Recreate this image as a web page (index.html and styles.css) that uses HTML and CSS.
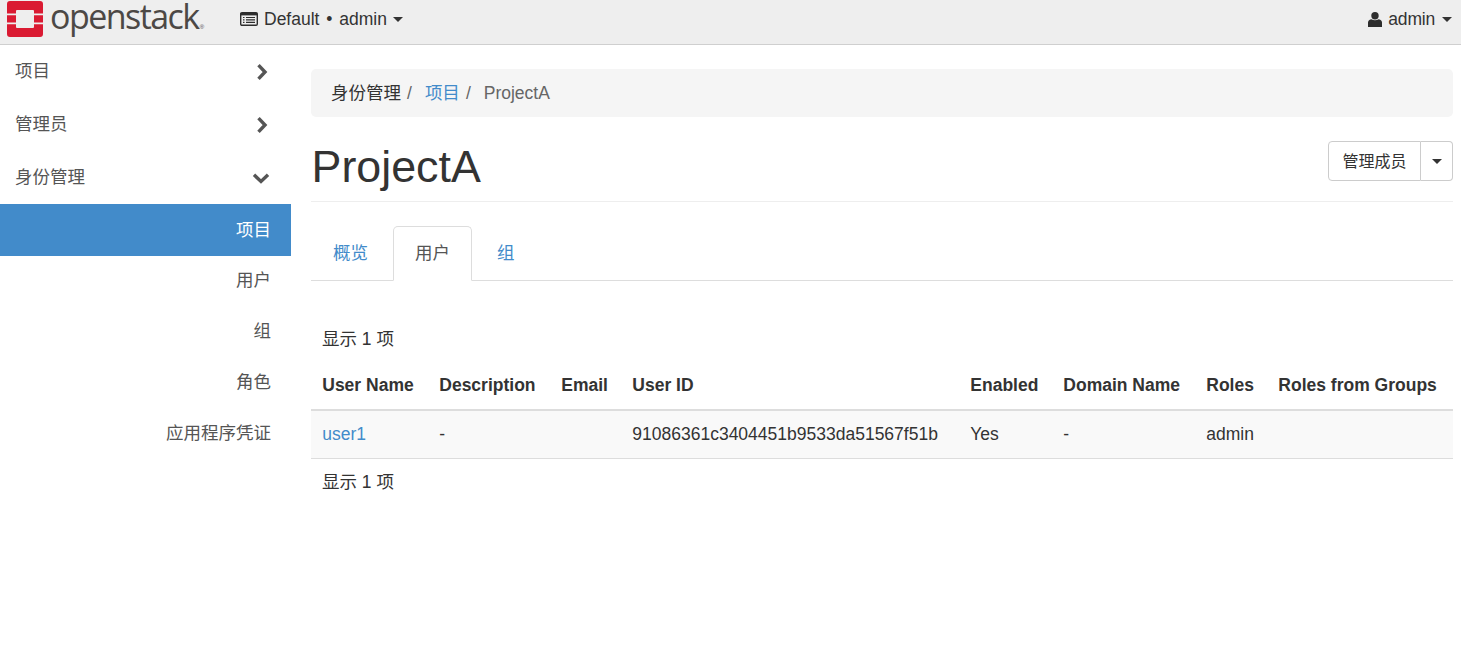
FILE: index.html
```html
<!DOCTYPE html>
<html lang="zh">
<head>
<meta charset="utf-8">
<title>ProjectA</title>
<link rel="stylesheet" href="styles.css">
</head>
<body>
<header class="topbar">
  <a class="brand">
    <svg class="logo" width="36" height="36" viewBox="0 0 36 36"><path fill="#da1a32" fill-rule="evenodd" d="M3 0H33Q36 0 36 3V12.5H27V10Q27 9 26 9H10Q9 9 9 10V12.5H0V3Q0 0 3 0ZM0 14.2H9V21.5H0ZM27 14.2H36V21.5H27ZM0 23.2H9V26Q9 27 10 27H26Q27 27 27 26V23.2H36V33Q36 36 33 36H3Q0 36 0 33Z"/></svg>
    <span class="brand-name">openstack</span><span class="brand-mark">®</span>
  </a>
  <div class="context">
    <svg class="ctx-icon" width="18" height="14" viewBox="0 0 18 14"><rect x="0.7" y="0.7" width="16.6" height="12.6" rx="1.2" fill="none" stroke="#2d2d2d" stroke-width="1.4"/><rect x="0.7" y="1" width="16.6" height="2.4" fill="#2d2d2d"/><path d="M3 5.5H4.5M6 5.5H15M3 7.9H4.5M6 7.9H15M3 10.3H4.5M6 10.3H15" stroke="#2d2d2d" stroke-width="1.2"/></svg>
    <span>Default <span class="dot">•</span> admin</span><i class="caret"></i>
  </div>
  <div class="user">
    <svg width="14" height="15" viewBox="0 0 14 15"><circle cx="7" cy="3.8" r="3.7" fill="#2d2d2d"/><path d="M0 15V10.6Q0 7.8 3.2 7.2Q7 9.4 10.8 7.2Q14 7.8 14 10.6V15Z" fill="#2d2d2d"/></svg>
    <span class="user-name">admin</span><i class="caret"></i>
  </div>
</header>
<div class="layout">
  <nav class="sidebar">
    <a class="nav-top"><span>项目</span><svg class="chev" width="14" height="18" viewBox="0 0 14 18"><path d="M3.5 2.2L10 9L3.5 15.8" fill="none" stroke="#555" stroke-width="3.4"/></svg></a>
    <a class="nav-top"><span>管理员</span><svg class="chev" width="14" height="18" viewBox="0 0 14 18"><path d="M3.5 2.2L10 9L3.5 15.8" fill="none" stroke="#555" stroke-width="3.4"/></svg></a>
    <a class="nav-top"><span>身份管理</span><svg class="chev down" width="18" height="12" viewBox="0 0 18 12"><path d="M2 2.8L9 9.4L16 2.8" fill="none" stroke="#555" stroke-width="3.4"/></svg></a>
    <a class="nav-sub active">项目</a>
    <a class="nav-sub">用户</a>
    <a class="nav-sub">组</a>
    <a class="nav-sub">角色</a>
    <a class="nav-sub">应用程序凭证</a>
  </nav>
  <main class="content">
    <ol class="crumbs">
      <li class="crumb-first">身份管理</li><li class="sep">/</li>
      <li class="link">项目</li><li class="sep">/</li>
      <li class="current">ProjectA</li>
    </ol>
    <div class="page-header">
      <h1>ProjectA</h1>
      <div class="btn-group"><button class="btn">管理成员</button><button class="btn btn-caret"><i class="caret"></i></button></div>
    </div>
    <ul class="tabs">
      <li class="tab link">概览</li>
      <li class="tab active">用户</li>
      <li class="tab link">组</li>
    </ul>
    <div class="count first">显示 1 项</div>
    <table class="grid">
      <thead>
        <tr><th>User Name</th><th>Description</th><th>Email</th><th class="wide">User ID</th><th>Enabled</th><th>Domain Name</th><th>Roles</th><th>Roles from Groups</th></tr>
      </thead>
      <tbody>
        <tr><td class="link">user1</td><td>-</td><td></td><td>91086361c3404451b9533da51567f51b</td><td>Yes</td><td>-</td><td>admin</td><td></td></tr>
      </tbody>
    </table>
    <div class="count">显示 1 项</div>
  </main>
</div>
</body>
</html>
```
FILE: styles.css
```css
* { box-sizing: border-box; }
html, body { margin: 0; padding: 0; }
body {
  font-family: "Liberation Sans", "Noto Sans CJK SC", sans-serif;
  font-size: 17.5px;
  line-height: 25px;
  color: #333;
  background: #fff;
  overflow: hidden;
  height: 671px;
}
.link { color: #428bca; }
.caret {
  display: inline-block;
  width: 0;
  height: 0;
  border-top: 5.5px solid #333;
  border-left: 5.5px solid transparent;
  border-right: 5.5px solid transparent;
}
.topbar {
  display: flex;
  align-items: center;
  height: 45px;
  background: #eee;
  border-bottom: 1px solid #cfcfcf;
  padding: 0 9px 6px 7px;
}
.brand { display: flex; align-items: center; width: 233px; }
.logo { flex: none; }
.brand-name {
  font-family: "Open Sans", sans-serif;
  font-size: 34px;
  font-weight: 500;
  letter-spacing: -1.55px;
  color: #4c4845;
  margin: 0 0 7px 7px;
  line-height: 30px;
}
.brand-mark { font-size: 6px; color: #4c4845; margin: 17px 0 0 1px; }
.context { display: flex; align-items: center; gap: 6px; }
.dot { margin: 0 2px; }
.user { margin-left: auto; display: flex; align-items: center; gap: 6px; }
.user .caret { margin-left: 1px; }
.user-name { letter-spacing: -0.2px; }
.layout { display: flex; }
.sidebar { width: 291px; flex: none; display: flex; flex-direction: column; }
.nav-top {
  display: flex;
  align-items: center;
  justify-content: space-between;
  height: 53px;
  padding: 0 22px 0 15px;
  color: #555;
}
.nav-top .down { margin-right: -1px; }
.nav-sub {
  height: 51px;
  line-height: 48px;
  padding-right: 20px;
  text-align: right;
  color: #555;
}
.nav-sub.active { background: #428bca; color: #fff; height: 52px; line-height: 52px; }
.content { flex: 1; padding: 24px 8px 0 20px; }
.crumbs {
  display: flex;
  list-style: none;
  margin: 0;
  height: 48px;
  align-items: center;
  padding: 0 20px;
  background: #f5f5f5;
  border-radius: 5px;
  color: #666;
}
.crumb-first { color: #333; }
.sep { color: #666; padding: 0 10px 0 6px; }
.sep + .current, .sep + .link { margin-left: 3px; }
.page-header {
  display: flex;
  align-items: flex-start;
  justify-content: space-between;
  height: 85px;
  border-bottom: 1px solid #eee;
}
h1 {
  font-size: 44.8px;
  font-weight: 400;
  line-height: 50px;
  margin: 24px 0 0 0.5px;
  color: #333;
}
.btn-group { display: flex; margin-top: 24px; }
.btn {
  height: 40px;
  font: inherit;
  font-size: 16px;
  color: #333;
  background: #fff;
  border: 1px solid #ccc;
  border-radius: 4px 0 0 4px;
  padding: 0 13.5px;
}
.btn-caret {
  border-left: 0;
  border-radius: 0 4px 4px 0;
  padding: 0 10.5px;
  display: flex;
  align-items: center;
}
.btn-caret .caret {
  border-top-width: 5px;
  border-left-width: 5px;
  border-right-width: 5px;
}
.tabs {
  display: flex;
  gap: 3px;
  list-style: none;
  margin: 24px 0 0;
  padding: 0;
  height: 55px;
  border-bottom: 1px solid #ddd;
}
.tab {
  height: 54px;
  padding: 0 21px;
  line-height: 52px;
  border: 1px solid transparent;
  border-radius: 5px 5px 0 0;
}
.tab.active {
  height: 55px;
  color: #555;
  background: #fff;
  border-color: #ddd #ddd #fff;
}
.count { padding: 0 11px; height: 25px; }
.count.first { margin-top: 46px; }
.grid { width: 100%; border-collapse: collapse; margin-top: 10px; }
.grid th {
  text-align: left;
  padding: 11px 11.25px;
  height: 47px;
  white-space: nowrap;
  border-bottom: 2px solid #ddd;
  font-weight: 700;
}
.grid th.wide { width: 338px; }
.grid td {
  padding: 11px 11.25px;
  height: 48px;
  background: #f9f9f9;
  border-bottom: 1px solid #ddd;
  white-space: nowrap;
}
.grid + .count { margin-top: 11px; }
```
